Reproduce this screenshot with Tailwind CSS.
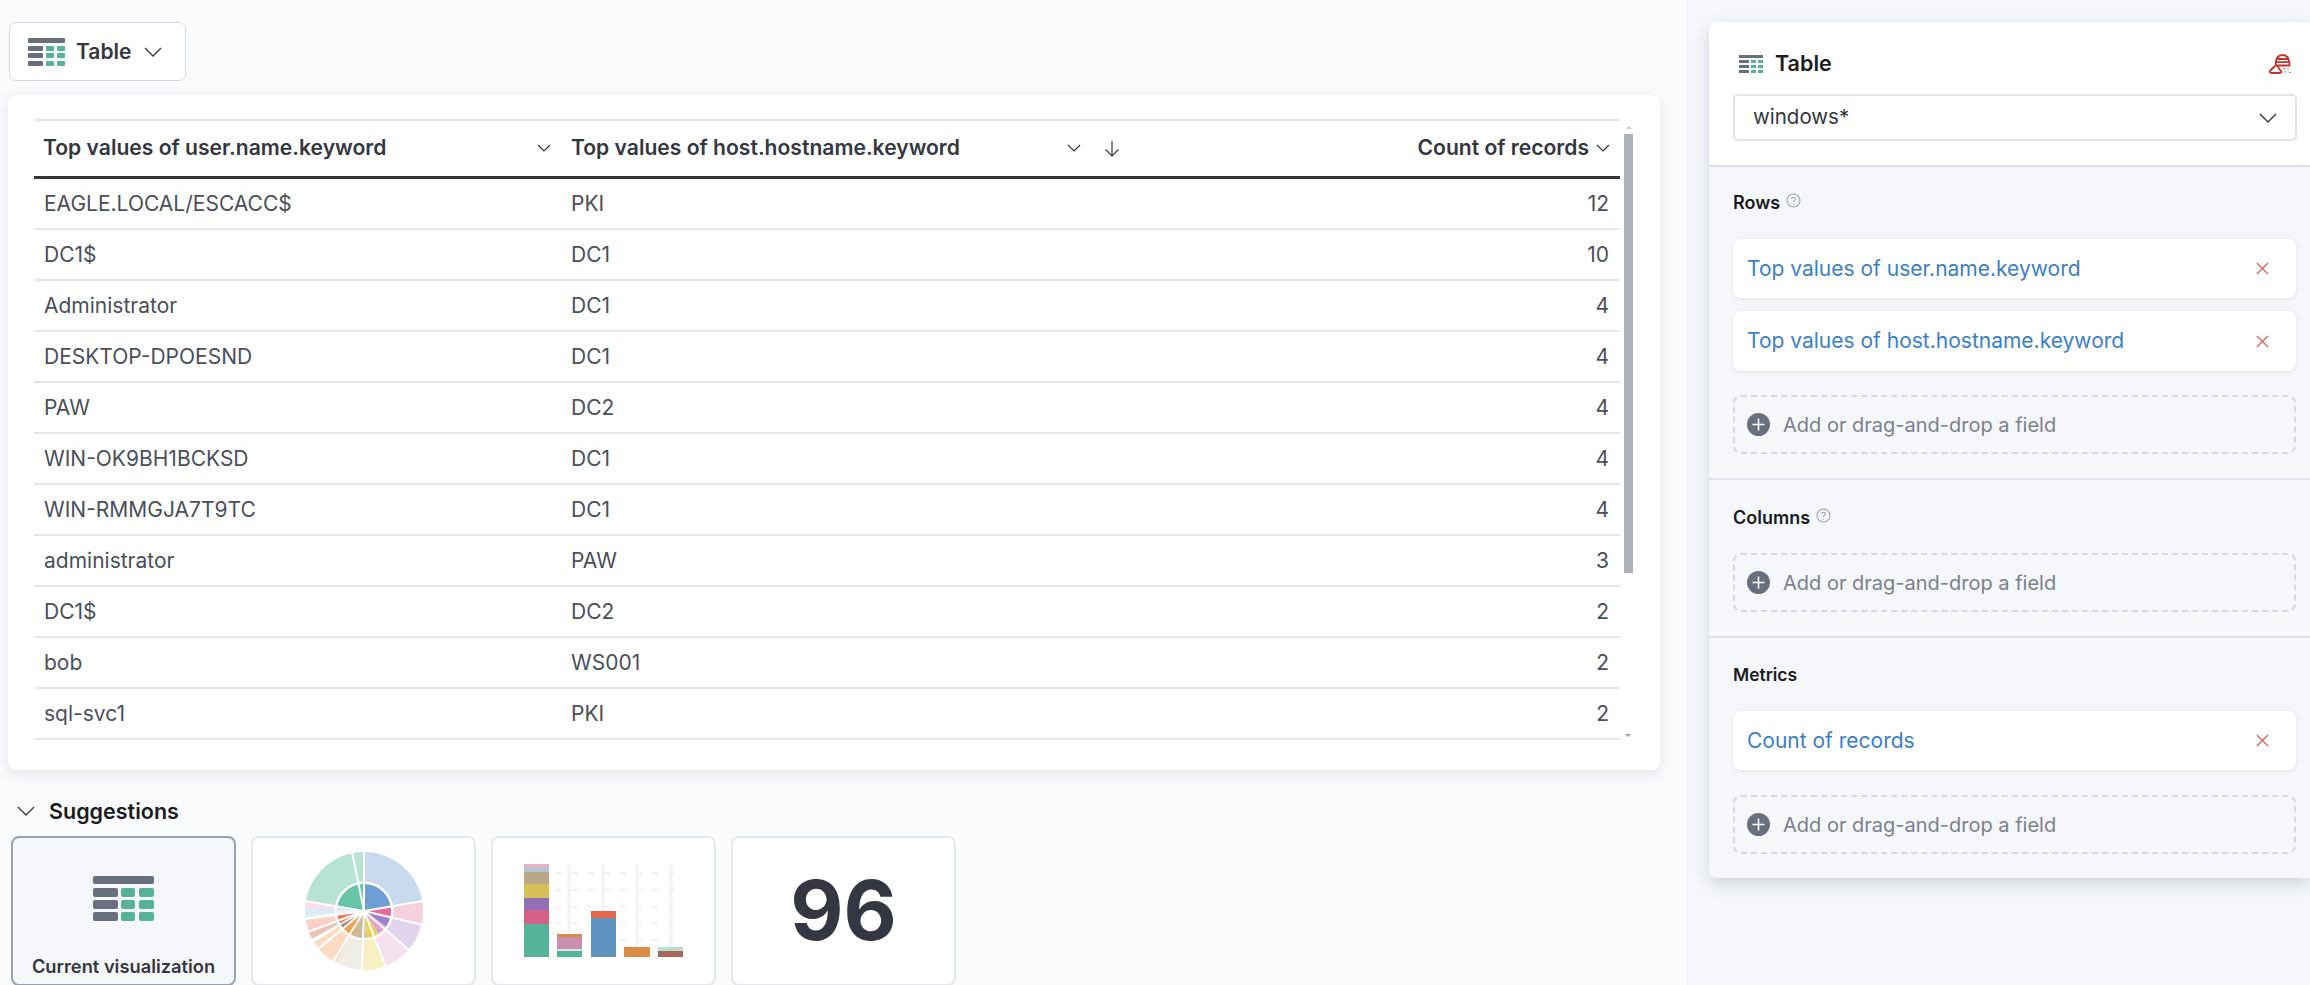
<!DOCTYPE html>
<html lang="en">

<head>
  <meta charset="utf-8">
  <title>Table</title>
  <script src="https://cdn.jsdelivr.net/npm/@tailwindcss/browser@4"></script>
</head>

<body class="bg-[#fafbfd] font-['Inter',sans-serif] text-[#343741] overflow-hidden">

  <div class="flex h-[985px] w-[2310px]">

    <!-- Workspace -->
    <main class="w-[1686px] shrink-0 pt-[22px]">

      <button class="ml-[9px] flex h-[59px] w-[177px] items-center rounded-[7px] border border-[#d3dae6] bg-white pl-[18px]">
        <svg width="37" height="28" viewBox="0 0 37 28" class="shrink-0">
          <rect x="0" y="0" width="37" height="5" rx="1" fill="#69707d" />
          <rect x="0" y="8" width="15" height="5" rx="1" fill="#69707d" />
          <rect x="0" y="15" width="15" height="5" rx="1" fill="#69707d" />
          <rect x="0" y="23" width="15" height="5" rx="1" fill="#69707d" />
          <rect x="18" y="8" width="8" height="5" rx="1" fill="#54b399" />
          <rect x="29" y="8" width="8" height="5" rx="1" fill="#54b399" />
          <rect x="18" y="15" width="8" height="5" rx="1" fill="#54b399" />
          <rect x="29" y="15" width="8" height="5" rx="1" fill="#54b399" />
          <rect x="18" y="23" width="8" height="5" rx="1" fill="#54b399" />
          <rect x="29" y="23" width="8" height="5" rx="1" fill="#54b399" />
        </svg>
        <span class="ml-[11px] text-[21px] font-semibold">Table</span>
        <svg width="18" height="10" viewBox="0 0 18 10" class="ml-[13px]" fill="none" stroke="#343741" stroke-width="1.3"><path d="M1 1l8 8 8-8" /></svg>
      </button>

      <!-- Data table card -->
      <section class="relative mt-[14px] ml-[8px] h-[675px] w-[1652px] rounded-[8px] bg-white pt-[24px] pl-[26px] shadow-[0_4px_14px_rgba(65,78,101,0.13)]">
        <table class="w-[1586px] table-fixed border-t-2 border-[#e3e8f0] text-[21px] text-[#4a4f5a]">
          <thead class="text-[21.1px] text-[#343741]">
            <tr class="h-[57px] border-b-[3px] border-[#343741] font-semibold">
              <th class="w-[527px] pl-[9px] text-left font-semibold">
                <div class="flex items-center justify-between pr-[10px]">
                  <span>Top values of user.name.keyword</span>
                  <svg width="14" height="8" viewBox="0 0 14 8" fill="none" stroke="#343741" stroke-width="1.2"><path d="M1 1l6 6 6-6" /></svg>
                </div>
              </th>
              <th class="w-[529px] pl-[10px] text-left font-semibold">
                <div class="flex items-center justify-between">
                  <span>Top values of host.hostname.keyword</span>
                  <span class="flex items-center gap-[23px]">
                    <svg width="14" height="8" viewBox="0 0 14 8" fill="none" stroke="#343741" stroke-width="1.2"><path d="M1 1l6 6 6-6" /></svg>
                    <svg width="16" height="17" viewBox="0 0 16 17" fill="none" stroke="#343741" stroke-width="1.2" class="mr-[-30px]"><path d="M8 1v15M1.500 9.500L8 16l6.500-6.500" /></svg>
                  </span>
                </div>
              </th>
              <th class="pr-[10px] text-right font-semibold">
                <div class="flex items-center justify-end gap-[7px]">
                  <span>Count of records</span>
                  <svg width="14" height="8" viewBox="0 0 14 8" fill="none" stroke="#343741" stroke-width="1.2"><path d="M1 1l6 6 6-6" /></svg>
                </div>
              </th>
            </tr>
          </thead>
          <tbody class="[&>tr]:h-[51px] [&>tr:first-child]:h-[52px] [&>tr]:border-b-2 [&>tr]:border-[#e3e8f0] [&_td:first-child]:pl-[10px] [&_td:nth-child(2)]:pl-[10px] [&_td:last-child]:pr-[11px] [&_td:last-child]:text-right">
            <tr><td>EAGLE.LOCAL/ESCACC$</td><td>PKI</td><td>12</td></tr>
            <tr><td>DC1$</td><td>DC1</td><td>10</td></tr>
            <tr><td>Administrator</td><td>DC1</td><td>4</td></tr>
            <tr><td>DESKTOP-DPOESND</td><td>DC1</td><td>4</td></tr>
            <tr><td>PAW</td><td>DC2</td><td>4</td></tr>
            <tr><td>WIN-OK9BH1BCKSD</td><td>DC1</td><td>4</td></tr>
            <tr><td>WIN-RMMGJA7T9TC</td><td>DC1</td><td>4</td></tr>
            <tr><td>administrator</td><td>PAW</td><td>3</td></tr>
            <tr><td>DC1$</td><td>DC2</td><td>2</td></tr>
            <tr><td>bob</td><td>WS001</td><td>2</td></tr>
            <tr><td>sql-svc1</td><td>PKI</td><td>2</td></tr>
          </tbody>
        </table>
        <!-- scrollbar -->
        <div class="absolute top-[39px] left-[1616px] h-[439px] w-[9px] bg-[#aeb3bb]"></div>
        <div class="absolute top-[31px] left-[1618px] h-0 w-0 border-x-[3px] border-b-[3px] border-x-transparent border-b-[#c4c8cf]"></div>
        <div class="absolute top-[639px] left-[1617px] h-0 w-0 border-x-[3px] border-t-[3px] border-x-transparent border-t-[#9aa0a9]"></div>
      </section>

      <!-- Suggestions -->
      <div class="mt-[30px] ml-[17px] flex h-[22px] items-center">
        <svg width="18" height="10" viewBox="0 0 18 10" fill="none" stroke="#343741" stroke-width="1.3"><path d="M1 1l8 8 8-8" /></svg>
        <h2 class="ml-[14px] text-[21.5px] font-semibold text-[#1a1c21]">Suggestions</h2>
      </div>

      <div class="mt-[14px] ml-[11px] flex gap-[15px]">
        <div class="flex h-[150px] w-[225px] flex-col items-center rounded-[8px] border-2 border-[#98a2b3] bg-[#f5f7fa] pt-[38px]">
          <svg width="61" height="45" viewBox="0 0 61 45" class="shrink-0">
            <rect x="0" y="0" width="61" height="8" rx="2" fill="#69707d" />
            <rect x="0" y="12" width="25" height="9" rx="2" fill="#69707d" />
            <rect x="0" y="24" width="25" height="9" rx="2" fill="#69707d" />
            <rect x="0" y="36" width="25" height="9" rx="2" fill="#69707d" />
            <rect x="28" y="12" width="14" height="9" rx="2" fill="#54b399" />
            <rect x="46" y="12" width="15" height="9" rx="2" fill="#54b399" />
            <rect x="28" y="24" width="14" height="9" rx="2" fill="#54b399" />
            <rect x="46" y="24" width="15" height="9" rx="2" fill="#54b399" />
            <rect x="28" y="36" width="14" height="9" rx="2" fill="#54b399" />
            <rect x="46" y="36" width="15" height="9" rx="2" fill="#54b399" />
          </svg>
          <span class="mt-[33px] text-[18.3px] font-semibold leading-[24px]">Current visualization</span>
        </div>

        <div class="flex h-[150px] w-[225px] items-center justify-center rounded-[8px] border-2 border-[#e3e8f0] bg-white">
          <svg width="120" height="120" viewBox="-60 -60 120 120" fill="none">
            <g transform="rotate(-90)" stroke-width="30">
              <circle r="44" pathLength="360" stroke="#c9daef" stroke-dasharray="80 360" />
              <circle r="44" pathLength="360" stroke="#f7d0de" stroke-dasharray="23 360" stroke-dashoffset="-80" />
              <circle r="44" pathLength="360" stroke="#e2d4ee" stroke-dasharray="28 360" stroke-dashoffset="-103" />
              <circle r="44" pathLength="360" stroke="#f6e2ef" stroke-dasharray="27 360" stroke-dashoffset="-131" />
              <circle r="44" pathLength="360" stroke="#f8efc2" stroke-dasharray="24 360" stroke-dashoffset="-158" />
              <circle r="44" pathLength="360" stroke="#f0ede4" stroke-dasharray="26 360" stroke-dashoffset="-182" />
              <circle r="44" pathLength="360" stroke="#fbdcc2" stroke-dasharray="21 360" stroke-dashoffset="-208" />
              <circle r="44" pathLength="360" stroke="#fbdcc2" stroke-dasharray="9 360" stroke-dashoffset="-229" />
              <circle r="44" pathLength="360" stroke="#e6c5b6" stroke-dasharray="9 360" stroke-dashoffset="-241" />
              <circle r="44" pathLength="360" stroke="#fbd0c6" stroke-dasharray="12 360" stroke-dashoffset="-250" />
              <circle r="44" pathLength="360" stroke="#e0f3ef" stroke-dasharray="4 360" stroke-dashoffset="-262" />
              <circle r="44" pathLength="360" stroke="#d9ebf9" stroke-dasharray="7 360" stroke-dashoffset="-266" />
              <circle r="44" pathLength="360" stroke="#f9deea" stroke-dasharray="7 360" stroke-dashoffset="-273" />
              <circle r="44" pathLength="360" stroke="#b6e3d4" stroke-dasharray="68 360" stroke-dashoffset="-280" />
              <circle r="44" pathLength="360" stroke="#b6e3d4" stroke-dasharray="12 360" stroke-dashoffset="-348" />
            </g>
            <g transform="rotate(-90)" stroke-width="27">
              <circle r="13.500" pathLength="360" stroke="#6d9fd4" stroke-dasharray="83 360" />
              <circle r="13.500" pathLength="360" stroke="#e7689a" stroke-dasharray="22 360" stroke-dashoffset="-83" />
              <circle r="13.500" pathLength="360" stroke="#a67fcb" stroke-dasharray="20 360" stroke-dashoffset="-105" />
              <circle r="13.500" pathLength="360" stroke="#dca4cd" stroke-dasharray="23 360" stroke-dashoffset="-125" />
              <circle r="13.500" pathLength="360" stroke="#e9d25c" stroke-dasharray="27 360" stroke-dashoffset="-148" />
              <circle r="13.500" pathLength="360" stroke="#c8bc9c" stroke-dasharray="30 360" stroke-dashoffset="-175" />
              <circle r="13.500" pathLength="360" stroke="#f0a24f" stroke-dasharray="23 360" stroke-dashoffset="-205" />
              <circle r="13.500" pathLength="360" stroke="#b07f68" stroke-dasharray="12 360" stroke-dashoffset="-228" />
              <circle r="13.500" pathLength="360" stroke="#ee7655" stroke-dasharray="22 360" stroke-dashoffset="-240" />
              <circle r="13.500" pathLength="360" stroke="#e7f5f2" stroke-dasharray="10 360" stroke-dashoffset="-262" />
              <circle r="13.500" pathLength="360" stroke="#d3e5f6" stroke-dasharray="6 360" stroke-dashoffset="-272" />
              <circle r="13.500" pathLength="360" stroke="#67c4a8" stroke-dasharray="82 360" stroke-dashoffset="-278" />
            </g>
            <!-- ring gap and slice gaps -->
            <circle r="28.500" stroke="#fff" stroke-width="2" />
            <g stroke="#fff" stroke-width="2">
              <path d="M0 0V-60M0 0L59 -10M0 0L59 14M0 0L45 39M0 0L22 56M0 0L-2 60M0 0L-31 51M0 0L-46 38M0 0L-52 29M0 0L-56 21M0 0L-59 8M0 0L-59 -10M0 0L-12 -59" />
            </g>
          </svg>
        </div>

        <div class="h-[150px] w-[225px] rounded-[8px] border-2 border-[#e3e8f0] bg-white">
          <svg width="221" height="146" viewBox="0 0 221 146">
            <path stroke="#f1f3f7" stroke-width="2" stroke-dasharray="6 10" d="M63 35H189M63 52H189M63 69H189M63 85H189M63 102H189" />
            <path stroke="#f1f3f7" stroke-width="3" d="M76 26V110M110 26V85M144 26V110M178 26V110" />
            <rect x="31" y="86" width="25" height="33" fill="#54b399" />
            <rect x="31" y="72" width="25" height="14" fill="#d6608a" />
            <rect x="31" y="60" width="25" height="12" fill="#9170b8" />
            <rect x="31" y="46" width="25" height="14" fill="#d6bf57" />
            <rect x="31" y="34" width="25" height="12" fill="#b9a888" />
            <rect x="31" y="29" width="25" height="5" fill="#b7c4d6" />
            <rect x="31" y="26" width="25" height="3" fill="#eeb0c6" />
            <rect x="64" y="113" width="25" height="6" fill="#54b399" />
            <rect x="64" y="111" width="25" height="2" fill="#dfe3e8" />
            <rect x="64" y="99" width="25" height="12" fill="#ca8eae" />
            <rect x="64" y="96" width="25" height="3" fill="#da8b45" />
            <rect x="98" y="80" width="25" height="39" fill="#6092c0" />
            <rect x="98" y="73" width="25" height="7" fill="#e7664c" />
            <rect x="131" y="109" width="26" height="10" fill="#da8b45" />
            <rect x="165" y="113" width="25" height="6" fill="#aa6556" />
            <rect x="165" y="109" width="25" height="4" fill="#b7e1d3" />
          </svg>
        </div>

        <div class="flex h-[150px] w-[225px] items-center justify-center rounded-[8px] border-2 border-[#e3e8f0] bg-white">
          <span class="text-[82px] font-bold leading-none">96</span>
        </div>
      </div>
    </main>

    <!-- Layer panel -->
    <aside class="min-w-0 flex-1 bg-[#f5f7fa] pt-[22px] pl-[23px]">
      <div class="h-[856px] rounded-l-[8px] bg-[#f5f7fa] shadow-[0_6px_16px_rgba(65,78,101,0.2)]">

        <div class="h-[145px] rounded-tl-[8px] border-b-2 border-[#dde2ea] bg-white pt-[30px] pl-[24px]">
          <div class="flex h-[23px] items-center pr-[18px]">
            <svg width="24" height="18" viewBox="0 0 24 18" class="ml-[6px]">
              <rect x="0" y="0" width="24" height="3" fill="#69707d" />
              <rect x="0" y="5" width="10" height="3" fill="#69707d" />
              <rect x="0" y="10" width="10" height="3" fill="#69707d" />
              <rect x="0" y="15" width="10" height="3" fill="#69707d" />
              <rect x="12" y="5" width="5" height="3" fill="#54b399" />
              <rect x="19" y="5" width="5" height="3" fill="#54b399" />
              <rect x="12" y="10" width="5" height="3" fill="#54b399" />
              <rect x="19" y="10" width="5" height="3" fill="#54b399" />
              <rect x="12" y="15" width="5" height="3" fill="#54b399" />
              <rect x="19" y="15" width="5" height="3" fill="#54b399" />
            </svg>
            <span class="ml-[12px] text-[21.5px] font-semibold text-[#1a1c21]">Table</span>
            <svg width="23" height="20" viewBox="0 0 23 20" class="ml-auto" fill="none" stroke="#c0352c" stroke-width="1.8">
              <path d="M6.500 11.500C6.500 5 9 1 13.500 1S20.500 5 20.500 11.500zM7.500 5h12M7 8.200h13" />
              <path d="M8 11.500L12.500 18 11 19H2.500C.8 19 .3 17.500 1.300 16.500L6 12" />
              <path d="M15 14v1M19 14.500v1M16.500 17.500v1M21 18v1" stroke-width="1.300" />
            </svg>
          </div>
          <div class="mt-[19px] flex h-[47px] w-[564px] items-center justify-between rounded-[5px] border-2 border-[#e0e4ec] pr-[18px] pl-[18px] text-[20.5px]">
            <span>windows*</span>
            <svg width="18" height="10" viewBox="0 0 18 10" fill="none" stroke="#343741" stroke-width="1.400"><path d="M1 1l8 8 8-8" /></svg>
          </div>
        </div>

        <!-- Rows -->
        <div class="h-[313px] border-b-2 border-[#dde2ea] pt-[25px] pl-[24px]">
          <div class="flex h-[20px] items-center text-[18px] font-semibold text-[#1a1c21]">
            <span>Rows</span>
            <svg width="15" height="15" viewBox="0 0 14 14" class="ml-[6px] mb-[3px]" fill="none" stroke="#98a2b3" stroke-width="1"><circle cx="7" cy="7" r="6" /><path d="M5.200 5.500C5.200 3.500 8.800 3.500 8.800 5.500 8.800 7 7 6.800 7 8.500M7 10v1" /></svg>
          </div>
          <div class="mt-[27px] flex h-[59px] w-[563px] items-center justify-between rounded-[8px] bg-white pr-[27px] pl-[14px] text-[21px] text-[#3a7fc6] shadow-[0_1px_4px_rgba(65,78,101,0.12)]">
            <span>Top values of user.name.keyword</span>
            <svg width="13" height="13" viewBox="0 0 13 13" fill="none" stroke="#d9655d" stroke-width="1.400"><path d="M1 1l11 11M12 1L1 12" /></svg>
          </div>
          <div class="mt-[13px] flex h-[60px] w-[563px] items-center justify-between rounded-[8px] bg-white pr-[27px] pl-[14px] text-[21px] text-[#3a7fc6] shadow-[0_1px_4px_rgba(65,78,101,0.12)]">
            <span>Top values of host.hostname.keyword</span>
            <svg width="13" height="13" viewBox="0 0 13 13" fill="none" stroke="#d9655d" stroke-width="1.400"><path d="M1 1l11 11M12 1L1 12" /></svg>
          </div>
          <div class="mt-[24px] flex h-[59px] w-[563px] items-center rounded-[8px] border-2 border-dashed border-[#d3dae6] pl-[12px] text-[20px] text-[#7b818c]">
            <svg width="23" height="23" viewBox="0 0 23 23" class="mr-[13px]"><circle cx="11.500" cy="11.500" r="11.500" fill="#69707d" /><path d="M11.500 5.500v12M5.500 11.500h12" stroke="#fff" stroke-width="1.600" /></svg>
            <span>Add or drag-and-drop a field</span>
          </div>
        </div>

        <!-- Columns -->
        <div class="h-[158px] border-b-2 border-[#dde2ea] pt-[27px] pl-[24px]">
          <div class="flex h-[20px] items-center text-[18px] font-semibold text-[#1a1c21]">
            <span>Columns</span>
            <svg width="15" height="15" viewBox="0 0 14 14" class="ml-[6px] mb-[3px]" fill="none" stroke="#98a2b3" stroke-width="1"><circle cx="7" cy="7" r="6" /><path d="M5.200 5.500C5.200 3.500 8.800 3.500 8.800 5.500 8.800 7 7 6.800 7 8.500M7 10v1" /></svg>
          </div>
          <div class="mt-[26px] flex h-[59px] w-[563px] items-center rounded-[8px] border-2 border-dashed border-[#d3dae6] pl-[12px] text-[20px] text-[#7b818c]">
            <svg width="23" height="23" viewBox="0 0 23 23" class="mr-[13px]"><circle cx="11.500" cy="11.500" r="11.500" fill="#69707d" /><path d="M11.500 5.500v12M5.500 11.500h12" stroke="#fff" stroke-width="1.600" /></svg>
            <span>Add or drag-and-drop a field</span>
          </div>
        </div>

        <!-- Metrics -->
        <div class="pt-[27px] pl-[24px]">
          <div class="flex h-[20px] items-center text-[17.5px] font-semibold text-[#1a1c21]">
            <span>Metrics</span>
          </div>
          <div class="mt-[26px] flex h-[59px] w-[563px] items-center justify-between rounded-[8px] bg-white pr-[27px] pl-[14px] text-[21px] text-[#3a7fc6] shadow-[0_1px_4px_rgba(65,78,101,0.12)]">
            <span>Count of records</span>
            <svg width="13" height="13" viewBox="0 0 13 13" fill="none" stroke="#d9655d" stroke-width="1.400"><path d="M1 1l11 11M12 1L1 12" /></svg>
          </div>
          <div class="mt-[25px] flex h-[59px] w-[563px] items-center rounded-[8px] border-2 border-dashed border-[#d3dae6] pl-[12px] text-[20px] text-[#7b818c]">
            <svg width="23" height="23" viewBox="0 0 23 23" class="mr-[13px]"><circle cx="11.500" cy="11.500" r="11.500" fill="#69707d" /><path d="M11.500 5.500v12M5.500 11.500h12" stroke="#fff" stroke-width="1.600" /></svg>
            <span>Add or drag-and-drop a field</span>
          </div>
        </div>

      </div>
    </aside>
  </div>
</body>
</html>
